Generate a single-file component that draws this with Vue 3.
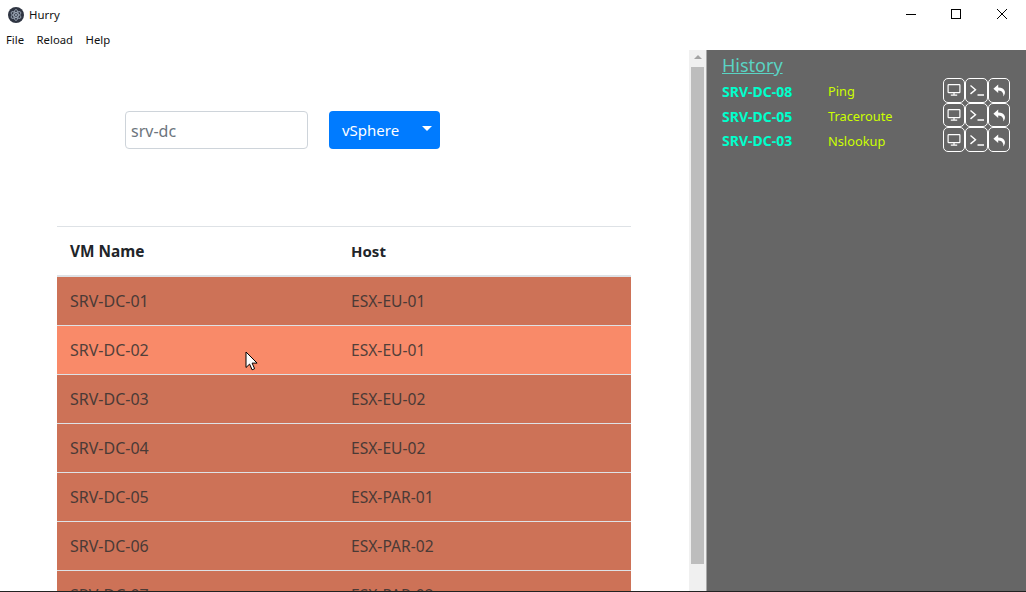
<script setup>
const vms = [
  { name: 'SRV-DC-01', host: 'ESX-EU-01' },
  { name: 'SRV-DC-02', host: 'ESX-EU-01', hover: true },
  { name: 'SRV-DC-03', host: 'ESX-EU-02' },
  { name: 'SRV-DC-04', host: 'ESX-EU-02' },
  { name: 'SRV-DC-05', host: 'ESX-PAR-01' },
  { name: 'SRV-DC-06', host: 'ESX-PAR-02' },
  { name: 'SRV-DC-07', host: 'ESX-PAR-02' }
]

const history = [
  { name: 'SRV-DC-08', action: 'Ping' },
  { name: 'SRV-DC-05', action: 'Traceroute' },
  { name: 'SRV-DC-03', action: 'Nslookup' }
]
</script>

<template>
  <div class="window">
    <header class="titlebar">
      <svg class="logo" width="16" height="16" viewBox="0 0 16 16">
        <circle cx="8" cy="8" r="8" fill="#2f3542" />
        <g fill="none" stroke="#a9b4c4" stroke-width="0.8">
          <ellipse cx="8" cy="8" rx="5.5" ry="2.2" transform="rotate(30 8 8)" />
          <ellipse cx="8" cy="8" rx="5.5" ry="2.2" transform="rotate(90 8 8)" />
          <ellipse cx="8" cy="8" rx="5.5" ry="2.2" transform="rotate(150 8 8)" />
        </g>
        <circle cx="8" cy="8" r="1" fill="#a9b4c4" />
      </svg>
      <span class="title">Hurry</span>
      <div class="controls">
        <svg width="12" height="12" viewBox="0 0 12 12"><path d="M0 6.5h10" stroke="#000" fill="none" /></svg>
        <svg width="12" height="12" viewBox="0 0 12 12"><rect x="1.5" y="1.5" width="9" height="9" stroke="#000" fill="none" /></svg>
        <svg width="12" height="12" viewBox="0 0 12 12"><path d="M1 1l10 10M11 1L1 11" stroke="#000" fill="none" /></svg>
      </div>
    </header>

    <nav class="menubar">
      <span>File</span>
      <span>Reload</span>
      <span>Help</span>
    </nav>

    <main class="main">
      <section class="left">
        <div class="content">
          <div class="search">
            <input class="search-input" type="text" placeholder="srv-dc" />
            <button class="dropdown">vSphere<i class="caret"></i></button>
          </div>
          <table class="vm-table">
            <thead>
              <tr>
                <th>VM Name</th>
                <th>Host</th>
              </tr>
            </thead>
            <tbody>
              <tr v-for="vm in vms" :key="vm.name" :class="{ hover: vm.hover }">
                <td>{{ vm.name }}</td>
                <td>{{ vm.host }}</td>
              </tr>
            </tbody>
          </table>
        </div>
        <div class="scrollbar">
          <i class="arrow"></i>
          <div class="thumb"></div>
        </div>
      </section>

      <aside class="history">
        <a class="history-title">History</a>
        <div class="history-list">
          <div v-for="item in history" :key="item.name" class="history-row">
            <span class="h-name">{{ item.name }}</span>
            <span class="h-action">{{ item.action }}</span>
            <div class="h-buttons">
              <button>
                <svg width="14" height="14" viewBox="0 0 14 14" fill="none" stroke="#fff" stroke-width="1.2">
                  <rect x="1.1" y="1.6" width="11.8" height="8" rx="0.6" />
                  <path d="M7 9.6v2.4M3.8 12.2h6.4" />
                </svg>
              </button>
              <button>
                <svg width="16" height="14" viewBox="0 0 16 14" fill="none" stroke="#fff" stroke-width="1.4">
                  <path d="M1.5 2.5l5 4.2-5 4.2M8.5 12h6.5" />
                </svg>
              </button>
              <button>
                <svg width="14" height="14" viewBox="0 0 14 14" fill="#fff">
                  <path d="M6.2 1.6L1.4 5.8l4.8 4.2V7.4c2.6 0 4.2.8 4.8 3.2.5 1 .4 1.9.1 2.8 1.6-1.6 2.2-3.4 1.7-5.2-.6-2.2-2.9-3.6-6.6-3.7z" />
                </svg>
              </button>
            </div>
          </div>
        </div>
      </aside>
    </main>

    <div class="bottom-edge"></div>

    <svg class="cursor" width="14" height="21" viewBox="0 0 14 21">
      <path d="M1 1v15.5l3.6-3.4 2.5 5.7 2.5-1.1-2.5-5.6h5z" fill="#fff" stroke="#000" stroke-width="1" />
    </svg>
  </div>
</template>

<style scoped>
.window {
  position: relative;
  width: 1026px;
  height: 592px;
  display: flex;
  flex-direction: column;
  overflow: hidden;
  background: #fff;
  font-family: "Noto Sans", "Open Sans", sans-serif;
  color: #212529;
}
.titlebar {
  height: 30px;
  flex: none;
  display: flex;
  align-items: center;
  padding-left: 8px;
  color: #111;
}
.logo {
  margin-right: 5px;
}
.title {
  font-size: 11.4px;
  margin-top: -1px;
}
.controls {
  margin-left: auto;
  display: flex;
  gap: 32px;
  padding-right: 18px;
  margin-top: -2px;
}
.controls svg:nth-child(2) {
  margin-right: 2px;
}
.menubar {
  height: 20px;
  flex: none;
  display: flex;
  gap: 12.5px;
  padding-left: 6px;
  font-size: 11.3px;
  line-height: 20px;
  color: #111;
}
.main {
  flex: 1;
  display: flex;
  min-height: 0;
}
.left {
  width: 707px;
  flex: none;
  display: flex;
  overflow: hidden;
}
.content {
  flex: 1;
  padding: 61px 0 0 57px;
  overflow: hidden;
}
.search {
  display: flex;
  margin-left: 68px;
  gap: 21px;
}
.search-input {
  width: 183px;
  height: 38px;
  box-sizing: border-box;
  padding: 2px 5px 0;
  border: 1px solid #ced4da;
  border-radius: 4px;
  font: 16px "Noto Sans", sans-serif;
  color: #495057;
}
.search-input::placeholder {
  color: #6c757d;
  opacity: 1;
}
.dropdown {
  width: 111px;
  height: 38px;
  display: flex;
  align-items: center;
  padding: 0 0 0 13px;
  border: none;
  border-radius: 4px;
  background: #007bff;
  color: #fff;
  font: 15px "Noto Sans", sans-serif;
}
.caret {
  margin-left: 23px;
  margin-top: -3px;
  border-top: 5px solid #fff;
  border-left: 5px solid transparent;
  border-right: 5px solid transparent;
}
.vm-table {
  width: 574px;
  margin-top: 77px;
  border-collapse: separate;
  border-spacing: 0;
  table-layout: fixed;
  font-size: 15.6px;
}
.vm-table th {
  height: 48px;
  padding: 0 12px;
  text-align: left;
  font-weight: 700;
  font-size: 15px;
  border-top: 1px solid #dee2e6;
  border-bottom: 2px solid #dee2e6;
}
.vm-table th:first-child,
.vm-table td:first-child {
  width: 282px;
  box-sizing: border-box;
  padding-left: 13px;
  font-size: 16px;
}
.vm-table th:first-child {
  font-size: 15.4px;
}
.vm-table td {
  height: 48px;
  padding: 0 12px;
  background: #cd7257;
  color: #4a3a36;
  border-bottom: 1px solid #dee2e6;
}
.vm-table tr.hover td {
  background: #f98a69;
  color: #52403a;
}
.scrollbar {
  position: relative;
  width: 17px;
  flex: none;
  background: #f0f0f0;
  border-right: 1px solid #a8a8a8;
}
.arrow {
  position: absolute;
  top: 5px;
  left: 5px;
  border-bottom: 4px solid #a3a3a3;
  border-left: 4px solid transparent;
  border-right: 4px solid transparent;
}
.thumb {
  position: absolute;
  top: 17px;
  left: 2px;
  width: 13px;
  height: 497px;
  background: #bdbdbd;
}
.history {
  flex: 1;
  background: #666;
  padding: 3px 0 0 15px;
}
.history-title {
  display: block;
  font-size: 18px;
  line-height: 25px;
  color: #5ad4c4;
  text-decoration: underline;
}
.history-list {
  display: flex;
  flex-direction: column;
}
.history-row {
  height: 24.7px;
  display: flex;
  align-items: center;
  font-size: 12.8px;
}
.h-name {
  width: 106px;
  padding-top: 2px;
  font-weight: 700;
  font-size: 14px;
  color: #00ffcc;
}
.h-action {
  width: 115px;
  padding-top: 2px;
  color: #ccff00;
}
.h-buttons {
  display: flex;
}
.h-buttons button {
  width: 22.4px;
  height: 24.7px;
  display: flex;
  align-items: center;
  justify-content: center;
  padding: 0;
  background: transparent;
  border: 1px solid #fff;
  border-radius: 5px;
}
.bottom-edge {
  position: absolute;
  left: 0;
  right: 0;
  bottom: 0;
  height: 1px;
  background: #222;
}
.cursor {
  position: absolute;
  left: 245px;
  top: 351px;
}
</style>
